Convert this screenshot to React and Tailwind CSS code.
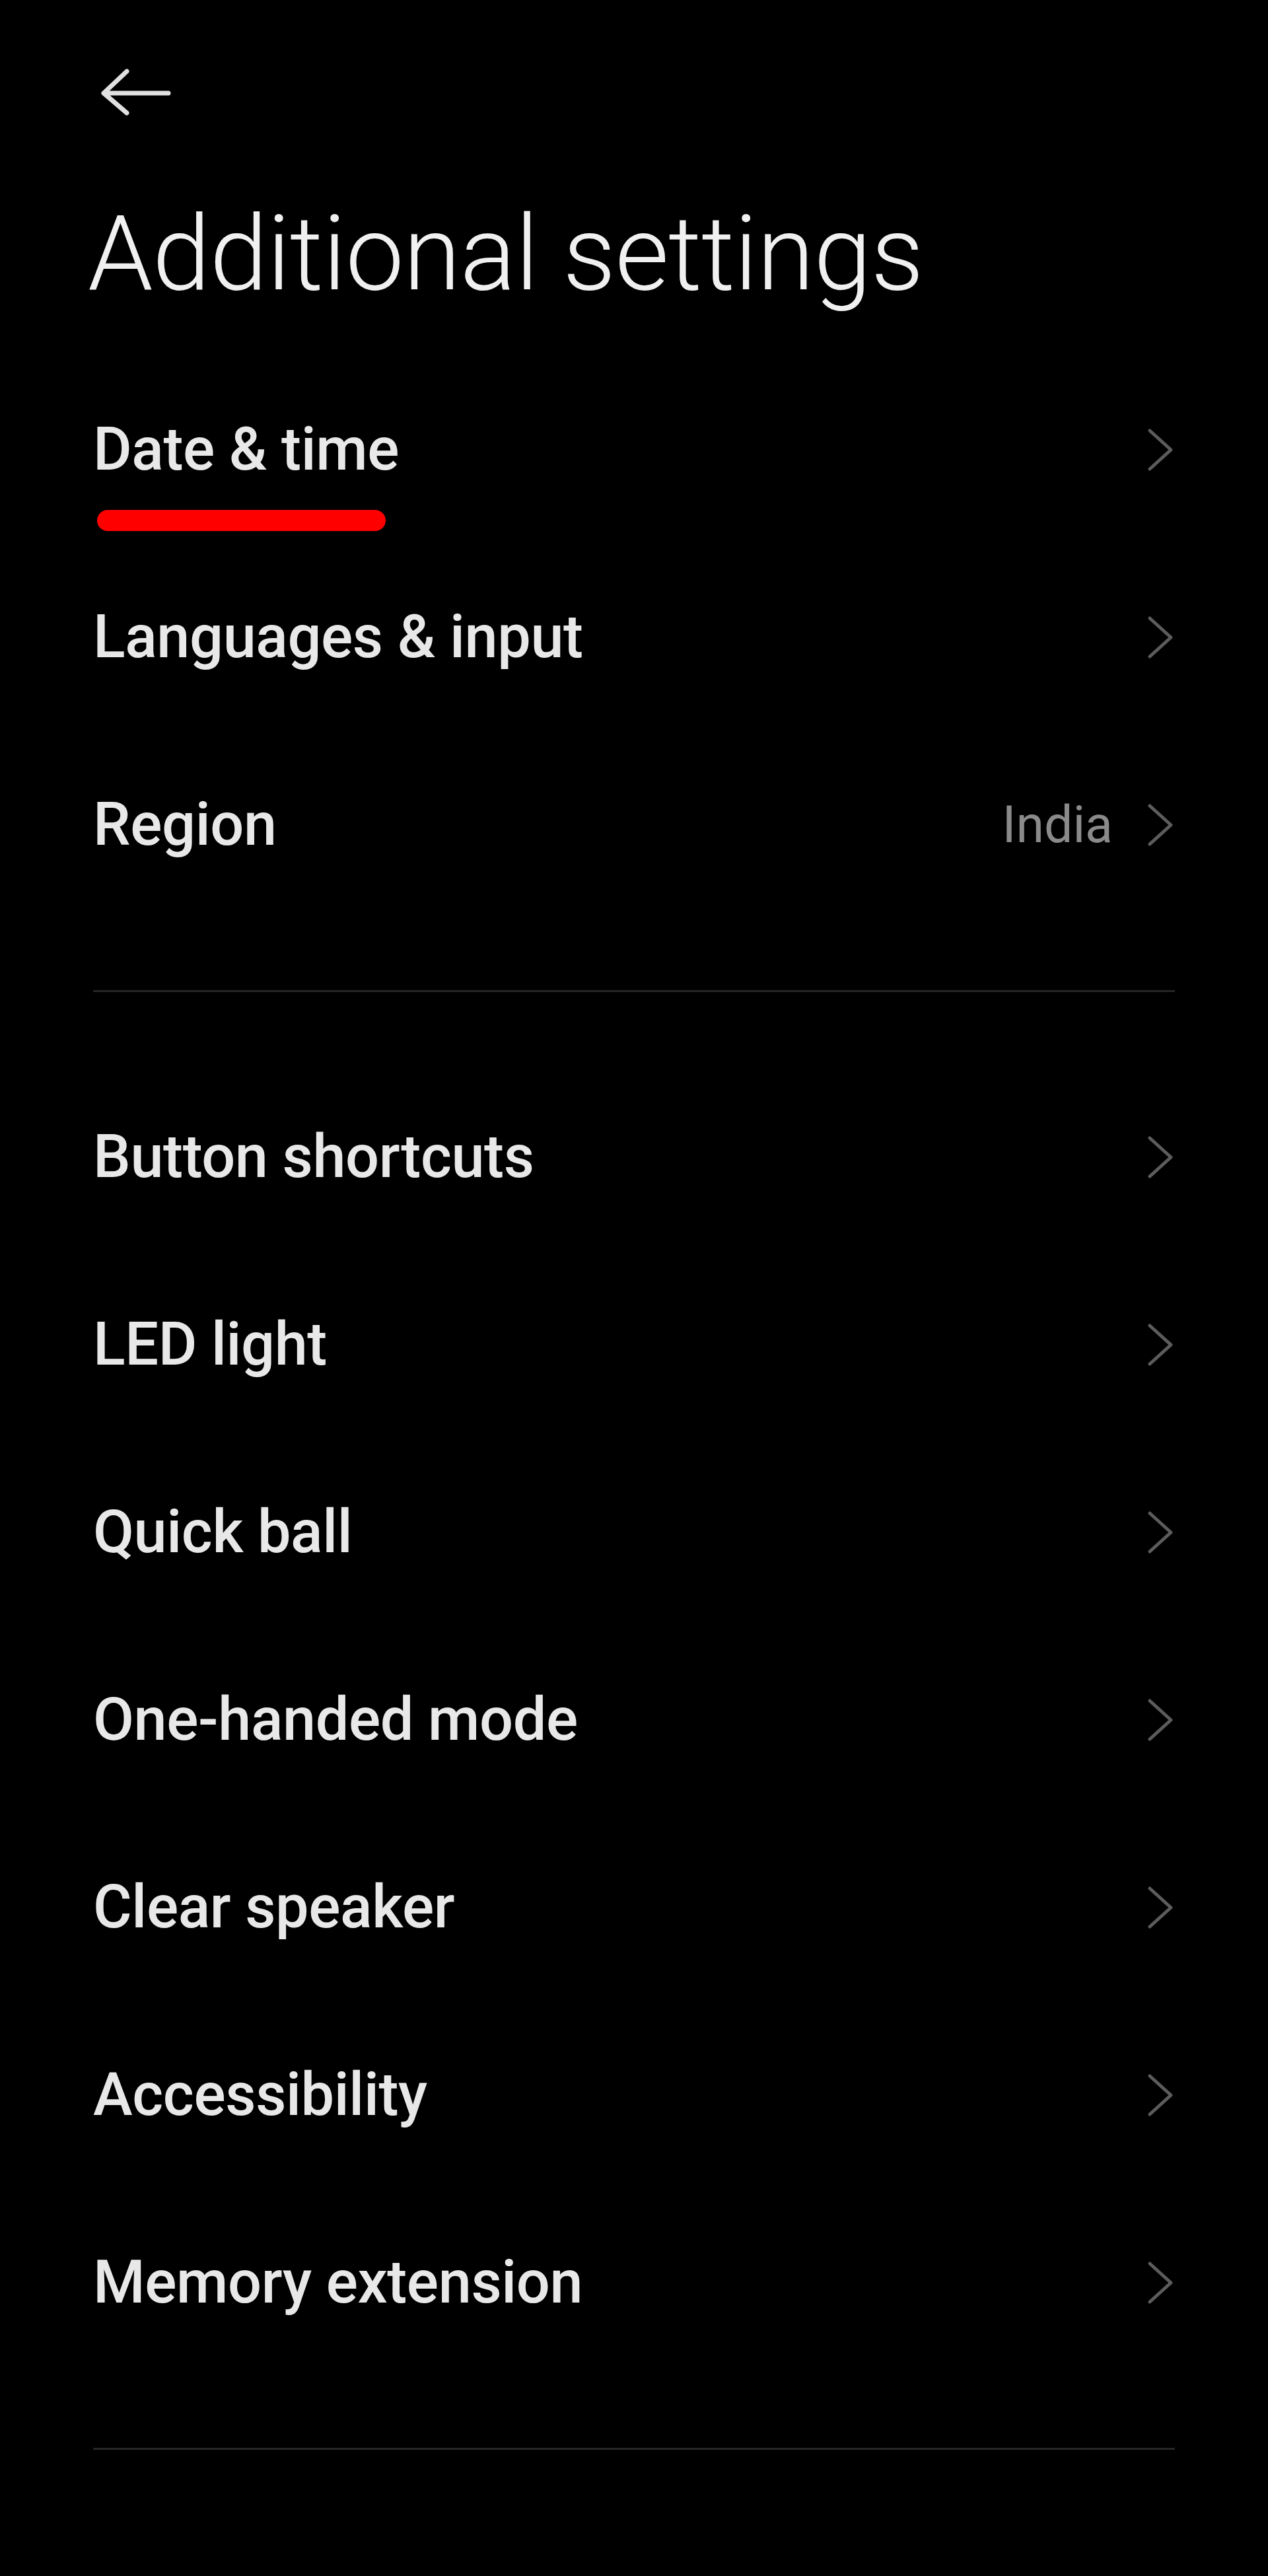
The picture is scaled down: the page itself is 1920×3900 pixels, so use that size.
import React from 'react';

const firstGroup = [
    { label: 'Date & time', marked: true },
    { label: 'Languages & input' },
    { label: 'Region', value: 'India' },
];

const secondGroup = [
    { label: 'Button shortcuts' },
    { label: 'LED light' },
    { label: 'Quick ball' },
    { label: 'One-handed mode' },
    { label: 'Clear speaker' },
    { label: 'Accessibility' },
    { label: 'Memory extension' },
];

function Chevron() {
    return (
        <svg className="w-[44px] h-[72px] shrink-0" viewBox="0 0 44 72" fill="none">
            <path d="M6 7 L38 36 L6 65" stroke="#5c5c5c" strokeWidth="5" strokeLinecap="round" strokeLinejoin="round" />
        </svg>
    );
}

function Row({ label, value, marked }) {
    return (
        <div className="relative h-[284px] flex items-center justify-between">
            <span className="text-[90px] font-medium text-[#e8e8e8] leading-none tracking-[-0.4px]">{label}</span>
            <div className="flex items-center gap-[50px]">
                {value && <span className="text-[77px] text-[#8a8a8a] leading-none">{value}</span>}
                <Chevron />
            </div>
            {/* red marker under the highlighted item */}
            {marked && <div className="absolute left-[6px] top-[233px] w-[437px] h-[32px] rounded-full bg-[#ff0000]" />}
        </div>
    );
}

function Divider() {
    return <div className="my-[108px] h-[3px] bg-[#262626]" />;
}

export default function App() {
    return (
        <div className="min-h-screen bg-black font-['Roboto',sans-serif]">
            <div className="px-[141px]">
                <div className="pt-[100px]">
                    <svg className="ml-[9px] block w-[112px] h-[80px]" viewBox="0 0 112 80" fill="none">
                        <path d="M7 41 H105 M42 8 L7 41 L42 71" stroke="#e0e0e0" strokeWidth="7" strokeLinecap="round" strokeLinejoin="round" />
                    </svg>
                </div>

                <h1 className="mt-[125px] -ml-[8px] text-[158px] font-light leading-none tracking-[-1px] text-[#f0f0f0]">
                    Additional settings
                </h1>

                <div className="mt-[76px]">
                    {firstGroup.map((item) => (
                        <Row key={item.label} {...item} />
                    ))}
                </div>

                <Divider />

                <div>
                    {secondGroup.map((item) => (
                        <Row key={item.label} {...item} />
                    ))}
                </div>

                <Divider />
            </div>
        </div>
    );
}
